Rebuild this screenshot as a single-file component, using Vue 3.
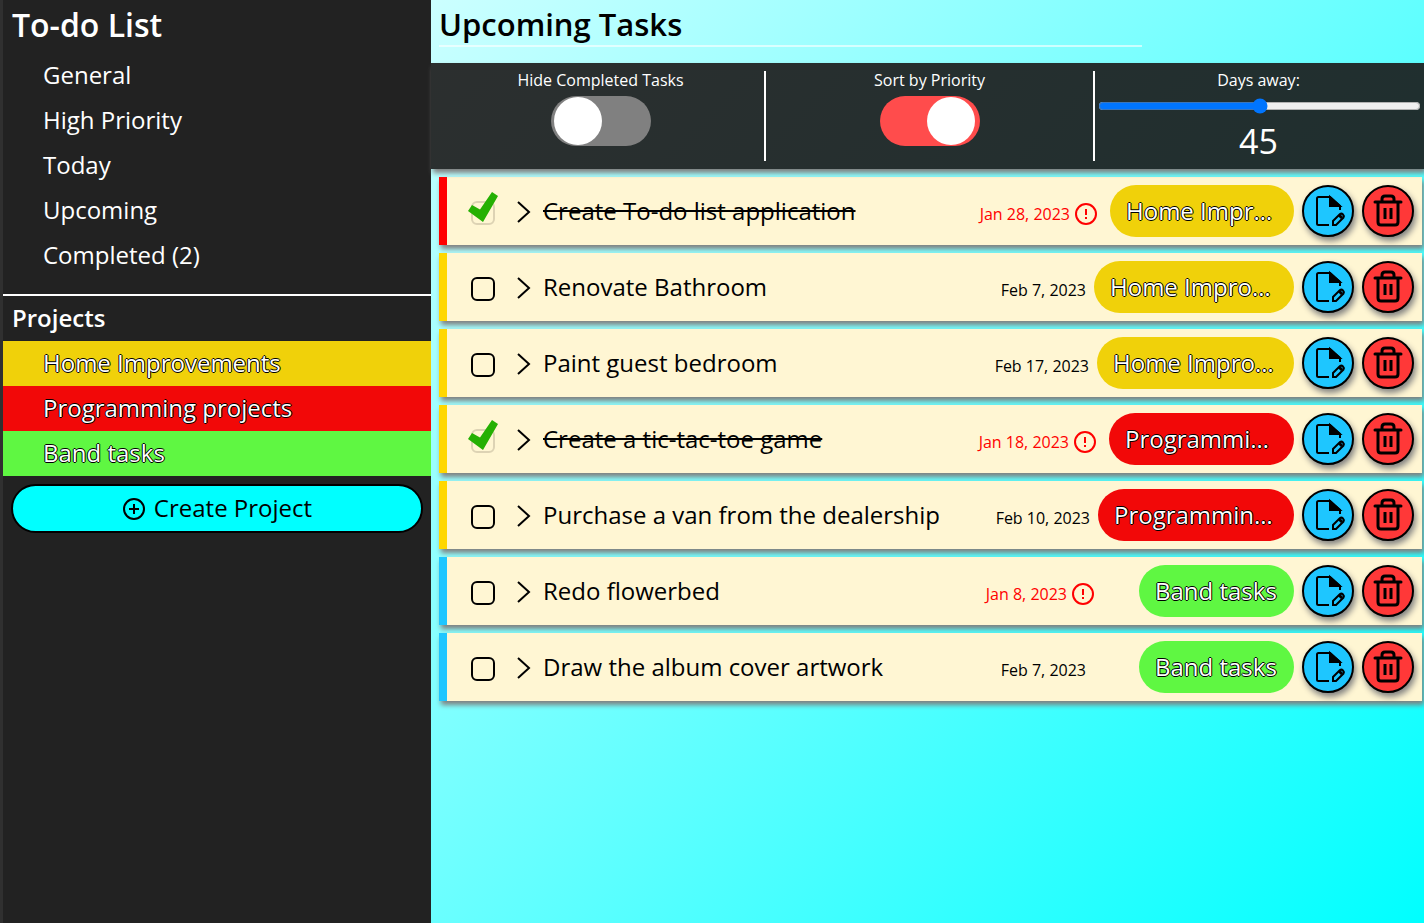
<script setup>
import { ref } from 'vue'

const views = ['General', 'High Priority', 'Today', 'Upcoming', 'Completed (2)']
const projects = [
  { name: 'Home Improvements', tone: 'yellow' },
  { name: 'Programming projects', tone: 'red' },
  { name: 'Band tasks', tone: 'green' },
]
const hideCompleted = ref(false)
const sortByPriority = ref(true)
const days = ref(45)

const tasks = ref([
  { title: 'Create To-do list application', due: 'Jan 28, 2023', late: true, done: true, priority: 'high', project: 0, slot: 197, tag: 184 },
  { title: 'Renovate Bathroom', due: 'Feb 7, 2023', late: false, done: false, priority: 'medium', project: 0, slot: 208, tag: 200 },
  { title: 'Paint guest bedroom', due: 'Feb 17, 2023', late: false, done: false, priority: 'medium', project: 0, slot: 205, tag: 197 },
  { title: 'Create a tic-tac-toe game', due: 'Jan 18, 2023', late: true, done: true, priority: 'medium', project: 1, slot: 198, tag: 185 },
  { title: 'Purchase a van from the dealership', due: 'Feb 10, 2023', late: false, done: false, priority: 'medium', project: 1, slot: 204, tag: 196 },
  { title: 'Redo flowerbed', due: 'Jan 8, 2023', late: true, done: false, priority: 'low', project: 2, slot: 200, tag: 155 },
  { title: 'Draw the album cover artwork', due: 'Feb 7, 2023', late: false, done: false, priority: 'low', project: 2, slot: 208, tag: 155 },
])
</script>

<template>
  <div class="app">
    <aside class="sidebar">
      <h1>To-do List</h1>
      <nav class="views">
        <a v-for="v in views" :key="v" href="#">{{ v }}</a>
      </nav>
      <h2>Projects</h2>
      <nav class="projects">
        <a v-for="p in projects" :key="p.name" href="#" class="outlined" :class="p.tone">{{ p.name }}</a>
      </nav>
      <button class="create" type="button">
        <svg width="24" height="24" viewBox="0 0 24 24" fill="none" stroke="#000" stroke-width="2" aria-hidden="true">
          <circle cx="12" cy="12" r="10" />
          <path d="M12 7v10M7 12h10" />
        </svg>
        Create Project
      </button>
    </aside>

    <main class="main">
      <header class="heading">
        <h1>Upcoming Tasks</h1>
        <div class="rule"></div>
      </header>

      <section class="controls">
        <div class="control">
          <label for="hide">Hide Completed Tasks</label>
          <input id="hide" v-model="hideCompleted" class="switch" type="checkbox" role="switch" />
        </div>
        <div class="control">
          <label for="sort">Sort by Priority</label>
          <input id="sort" v-model="sortByPriority" class="switch" type="checkbox" role="switch" />
        </div>
        <div class="control">
          <label for="days">Days away:</label>
          <input id="days" v-model="days" class="range" type="range" min="0" max="90" />
          <output for="days">{{ days }}</output>
        </div>
      </section>

      <ul class="tasks">
        <li v-for="t in tasks" :key="t.title" class="task" :class="[t.priority, { done: t.done }]">
          <label class="check">
            <input v-model="t.done" type="checkbox" :aria-label="t.title" />
            <svg v-if="t.done" class="tick" width="32" height="32" viewBox="0 0 32 32" aria-hidden="true">
              <path d="M1 20L5 14L13 18.500L25 1L31 5L16 31Z" fill="#25b003" />
            </svg>
          </label>
          <button class="expand" type="button" aria-label="Show details">
            <svg width="14" height="24" viewBox="0 0 14 24" fill="none" stroke="#000" stroke-width="2" aria-hidden="true">
              <path d="M1 2L12 12L1 22" />
            </svg>
          </button>
          <span class="title">{{ t.title }}</span>
          <span class="due" :class="{ late: t.late }">
            {{ t.due }}
            <svg v-if="t.late" width="22" height="22" viewBox="0 0 22 22" fill="none" stroke="red" stroke-width="2" aria-hidden="true">
              <circle cx="11" cy="11" r="10" />
              <path d="M11 6v6M11 14v2" />
            </svg>
          </span>
          <span class="slot" :style="{ width: t.slot + 'px' }">
            <span class="tag outlined" :class="projects[t.project].tone" :style="{ width: t.tag + 'px' }">{{ projects[t.project].name }}</span>
          </span>
          <button class="round edit" type="button" aria-label="Edit task">
            <svg width="36" height="36" viewBox="0 0 36 36" fill="none" stroke="#000" stroke-width="2" aria-hidden="true">
              <path d="M19 32H8.500Q7 32 7 30.500V5.500Q7 4 8.500 4H20L30 13V17" />
              <path d="M20 4V13H30Z" fill="#000" />
              <path d="M23 32V28L30 21Q31.500 20 33 21.500T33.500 24.500L26 32Z" />
              <path d="M29 22L32 25" stroke-width="3" />
            </svg>
          </button>
          <button class="round delete" type="button" aria-label="Delete task">
            <svg width="36" height="36" viewBox="0 0 36 36" fill="none" stroke="#000" stroke-width="3" aria-hidden="true">
              <path d="M5 9H31M8 9V29Q8 32 11 32H25Q28 32 28 29V9M12 8V6Q12 3 15 3H21Q24 3 24 6V8" stroke-linecap="round" />
              <path d="M15 15V26M21 15V26" />
            </svg>
          </button>
        </li>
      </ul>
    </main>
  </div>
</template>

<style>
body {
  margin: 0;
}
</style>

<style scoped>
.app {
  display: grid;
  grid-template-columns: minmax(0, 431fr) minmax(0, 993fr);
  min-height: 100vh;
  font-family: "Open Sans", "Noto Sans", sans-serif;
  font-size: 24px;
  color: #000;
}
h1,
h2 {
  margin: 0;
  font-weight: 600;
}
a {
  color: inherit;
  text-decoration: none;
}
button {
  font: inherit;
  color: inherit;
  padding: 0;
  cursor: pointer;
}
.sidebar {
  box-sizing: border-box;
  border-left: 3px solid #303030;
  background: #222;
  color: #fff;
}
.sidebar h1 {
  padding: 0 0 3px 9px;
  font-size: 32px;
  line-height: 50px;
}
.sidebar h2 {
  padding: 0 0 2px 9px;
  font-size: 24px;
  line-height: 43px;
}
.views {
  padding-bottom: 16px;
  border-bottom: 2px solid #fff;
}
.views a,
.projects a {
  display: block;
  padding: 0 0 2px 40px;
  line-height: 43px;
}
.yellow {
  background: #f0d10a;
}
.red {
  background: #f20808;
}
.green {
  background: #5ff742;
}
.outlined {
  color: #fff;
  text-shadow: -1px 0 #000, 0 1px #000, 1px 0 #000, 0 -1px #000;
}
.create {
  display: flex;
  align-items: center;
  justify-content: center;
  gap: 8px;
  box-sizing: border-box;
  width: calc(100% - 16px);
  height: 49px;
  margin: 8px;
  padding-bottom: 2px;
  border: 2px solid #000;
  border-radius: 25px;
  background: #0ff;
  color: #000;
}
.create svg {
  margin-top: 2px;
}
.main {
  background: linear-gradient(135deg, #cff, #0ff);
}
.heading {
  height: 63px;
  padding: 0 8px;
}
.heading h1 {
  font-size: 31px;
  line-height: 41px;
  padding-top: 4px;
}
.rule {
  width: 72%;
  height: 2px;
  background: rgba(255, 255, 255, 0.6);
}
.controls {
  position: relative;
  display: flex;
  box-sizing: border-box;
  height: 106px;
  padding: 8px 2px 8px 6px;
  background: linear-gradient(135deg, rgba(34, 34, 34, 0.94), rgba(28, 34, 34, 0.94));
  box-shadow: 2px 4px 5px #808080;
  color: #fff;
  font-size: 16px;
}
.control {
  flex: 1;
  display: flex;
  flex-direction: column;
  align-items: center;
  border-right: 2px solid #fff;
}
.control:last-child {
  border-right: 0;
}
.control label {
  line-height: 19px;
}
.switch {
  appearance: none;
  display: flex;
  align-items: center;
  box-sizing: border-box;
  width: 100px;
  height: 50px;
  margin: 6px 0 0;
  padding: 0 5px 0 3px;
  border-radius: 25px;
  background: #808080;
}
.switch::before {
  content: "";
  width: 48px;
  height: 48px;
  border-radius: 50%;
  background: #fff;
}
.switch:checked {
  justify-content: flex-end;
  background: #ff4c4c;
}
.range {
  width: calc(100% - 4px);
  height: 16px;
  margin: 8px 0 8px 2px;
}
.control output {
  font-size: 34px;
  line-height: 38px;
}
.tasks {
  display: flex;
  flex-direction: column;
  gap: 8px;
  margin: 0;
  padding: 8px 2px 8px 8px;
  list-style: none;
}
.task {
  display: flex;
  align-items: center;
  box-sizing: border-box;
  height: 68px;
  padding: 8px 8px 8px 24px;
  border-left: 8px solid;
  background: #fff6d3;
  box-shadow: 2px 4px 5px #808080;
}
.high {
  border-left-color: #f00;
}
.medium {
  border-left-color: #ffd700;
}
.low {
  border-left-color: #1ec6ff;
}
.check {
  position: relative;
  display: flex;
  padding-top: 3px;
}
.check input {
  appearance: none;
  box-sizing: border-box;
  width: 24px;
  height: 24px;
  margin: 0;
  border: 2px solid #000;
  border-radius: 6px;
}
.check input:checked {
  border-color: #ddd3b4;
}
.tick {
  position: absolute;
  left: -4px;
  bottom: 2px;
  pointer-events: none;
}
.expand {
  display: flex;
  margin: 2px 12px 0 22px;
  border: 0;
  background: none;
}
.title {
  flex: 1;
  min-width: 0;
  padding-bottom: 2px;
  white-space: nowrap;
}
.done .title {
  text-decoration: line-through;
  text-decoration-thickness: 2px;
}
.due {
  display: flex;
  align-items: center;
  gap: 5px;
  padding-top: 6px;
  font-size: 16px;
  white-space: nowrap;
}
.late {
  color: #f00;
}
.slot {
  display: flex;
  justify-content: flex-end;
}
.tag {
  box-sizing: border-box;
  padding: 0 16px;
  border-radius: 26px;
  line-height: 52px;
  overflow: hidden;
  text-overflow: ellipsis;
  white-space: nowrap;
}
.round {
  display: flex;
  align-items: center;
  justify-content: center;
  box-sizing: border-box;
  width: 52px;
  height: 52px;
  margin-left: 8px;
  border: 2px solid #000;
  border-radius: 50%;
  box-shadow: 2px 4px 6px #808080;
}
.edit {
  background: #1ec6ff;
}
.delete {
  background: #ff3838;
}
</style>
